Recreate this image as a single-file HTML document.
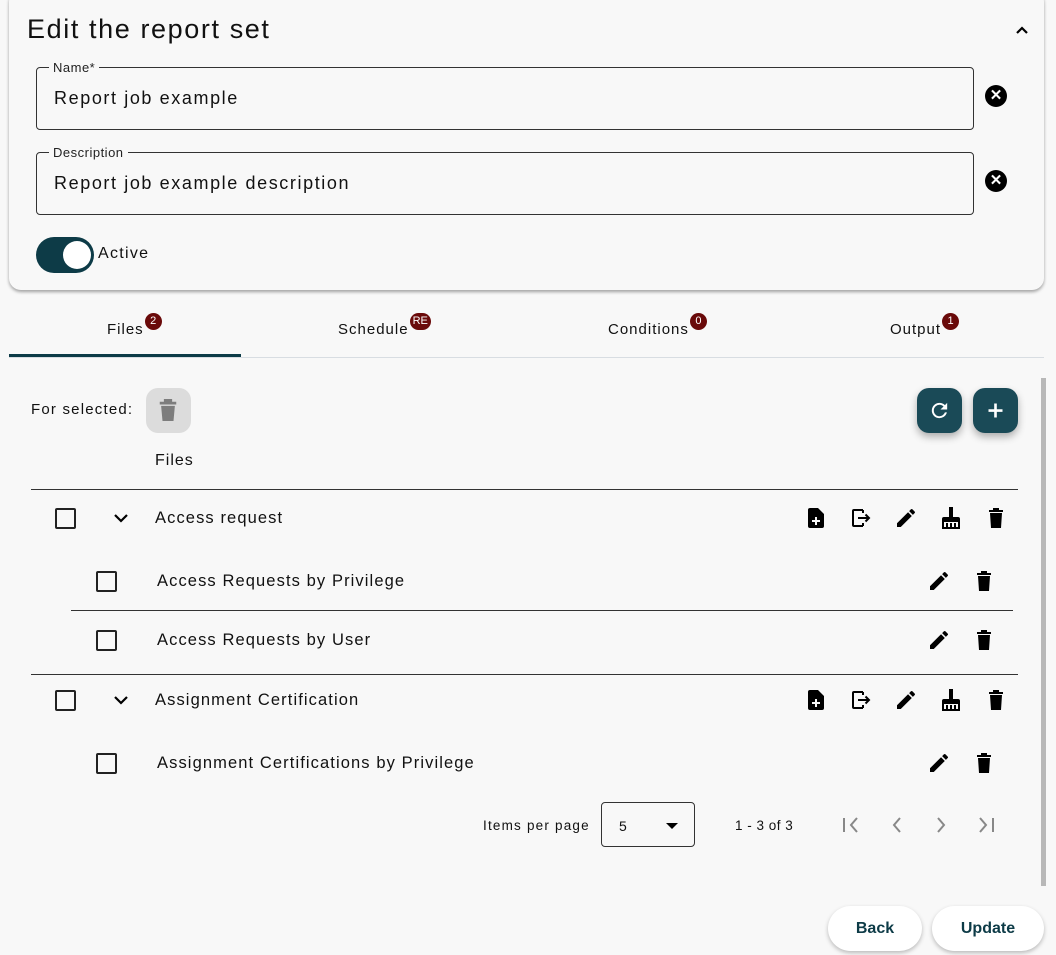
<!DOCTYPE html>
<html><head><meta charset="utf-8"><style>
*{box-sizing:border-box;margin:0;padding:0}
body{width:1056px;height:955px;background:#f8f8f8;font-family:"Liberation Sans",sans-serif;color:#111;position:relative;overflow:hidden}
.a{position:absolute}
.card{left:9px;top:-10px;width:1035px;height:300px;background:#f8f8f8;border-radius:12px;box-shadow:0 2px 3px rgba(0,0,0,.35)}
.field{border:1px solid #333;border-radius:4px;height:63px;left:36px;width:938px}
.lab{font-size:13px;background:#f8f8f8;padding:0 4px;left:12px;top:-8px;color:#222;letter-spacing:.5px}
.val{font-size:18px;left:17px;top:20px;letter-spacing:1.6px;white-space:nowrap}
.clr{width:22px;height:22px;border-radius:50%;background:#000;color:#fff;font-size:15px;font-weight:bold;text-align:center;line-height:22px}
.tab{font-size:15px;top:321px;letter-spacing:1px;white-space:nowrap}
.bd{display:inline-block;position:relative;top:-8px;min-width:17px;height:17px;padding:0 3px;border-radius:9px;background:#6a0a0a;color:#fff;font-size:11px;text-align:center;line-height:17px;letter-spacing:0;vertical-align:top;margin-left:1px}
.cb{width:21px;height:21px;border:2px solid #222;border-radius:2px}
.txt{font-size:16.5px;letter-spacing:1.1px;white-space:nowrap}
.ln{height:1px;background:#333}
.fab{width:45px;height:45px;border-radius:12px;background:#1a4a57;box-shadow:0 4px 8px rgba(0,0,0,.3)}
.pill{height:45px;border-radius:23px;background:#fff;box-shadow:0 2px 4px rgba(0,0,0,.25);font-weight:bold;font-size:16px;color:#0d3b47;text-align:center;line-height:45px}
</style></head><body>
<div class="a card"></div>
<div class="a" style="left:27px;top:14px;font-size:27px;letter-spacing:1.6px;color:#111;white-space:nowrap">Edit the report set</div>
<svg class="a" style="left:1014px;top:24px" width="16" height="12" viewBox="0 0 16 12"><path d="M3 9 L8 4 L13 9" stroke="#000" stroke-width="2.2" fill="none"/></svg>

<div class="a field" style="top:67px"><div class="a lab">Name*</div><div class="a val">Report job example</div></div>
<div class="a clr" style="left:985px;top:85px">✕</div>
<div class="a field" style="top:152px"><div class="a lab">Description</div><div class="a val">Report job example description</div></div>
<div class="a clr" style="left:985px;top:170px">✕</div>

<div class="a" style="left:36px;top:237px;width:58px;height:36px;border-radius:18px;background:#0d3b47"></div>
<div class="a" style="left:63px;top:241px;width:28px;height:28px;border-radius:50%;background:#fff"></div>
<div class="a" style="left:98px;top:245px;font-size:16px;letter-spacing:1.3px">Active</div>

<div class="a tab" style="left:107px">Files<span class="bd">2</span></div>
<div class="a tab" style="left:338px">Schedule<span class="bd">RE</span></div>
<div class="a tab" style="left:608px">Conditions<span class="bd">0</span></div>
<div class="a tab" style="left:890px">Output<span class="bd">1</span></div>
<div class="a" style="left:9px;top:357px;width:1035px;height:1px;background:#d8dde2"></div>
<div class="a" style="left:9px;top:354px;width:232px;height:3px;background:#0d3b47"></div>

<div class="a" style="left:1041px;top:378px;width:5px;height:508px;background:#b8b8b8"></div>

<div class="a" style="left:31px;top:401px;font-size:15px;letter-spacing:1.2px">For selected:</div>
<div class="a" style="left:146px;top:388px;width:45px;height:45px;border-radius:12px;background:#dcdcdc"></div>
<svg class="a" style="left:158px;top:399px" width="20" height="22" viewBox="0 0 14 16"><path d="M1 2h12v2H1zM4 0h6v2H4zM2 5h10l-1 11H3z" fill="#7d7d7d"/></svg>
<div class="a fab" style="left:917px;top:388px"></div>
<svg class="a" style="left:928px;top:399px" width="23" height="23" viewBox="0 0 24 24"><path d="M17.65 6.35A7.96 7.96 0 0 0 12 4a8 8 0 1 0 7.73 10h-2.08A6 6 0 1 1 12 6c1.66 0 3.14.69 4.22 1.78L13 11h7V4z" fill="#fff"/></svg>
<div class="a fab" style="left:973px;top:388px"></div>
<svg class="a" style="left:985px;top:400px" width="21" height="21" viewBox="0 0 24 24"><path d="M12 4v16M4 12h16" stroke="#fff" stroke-width="3"/></svg>
<div class="a" style="left:155px;top:452px;font-size:16px;letter-spacing:1px">Files</div>
<div class="a ln" style="left:31px;top:489px;width:987px"></div>

<svg width="0" height="0" style="position:absolute"><defs>
<symbol id="add" viewBox="0 0 24 24"><path d="M6 2h8l6 6v12a2 2 0 0 1-2 2H6a2 2 0 0 1-2-2V4a2 2 0 0 1 2-2zm5 9v3H8v2h3v3h2v-3h3v-2h-3v-3z" fill="#000" fill-rule="evenodd"/></symbol>
<symbol id="exp" viewBox="0 0 24 24"><path d="M14 4H5a1 1 0 0 0-1 1v14a1 1 0 0 0 1 1h9M14 17v3M14 4v3M9 12h11M16.5 8.5 20 12l-3.5 3.5" stroke="#000" stroke-width="2" fill="none"/></symbol>
<symbol id="pen" viewBox="0 0 24 24"><path d="M3 17.25V21h3.75L17.81 9.94l-3.75-3.75zM20.71 7.04a1 1 0 0 0 0-1.41l-2.34-2.34a1 1 0 0 0-1.41 0l-1.83 1.83 3.75 3.75z" fill="#000"/></symbol>
<symbol id="brm" viewBox="0 0 24 24"><path d="M10 1h4v10h5a2 2 0 0 1 2 2v10H3V13a2 2 0 0 1 2-2h5zM5 16v5h2v-4h2v4h2v-4h2v4h2v-4h2v4h2v-5z" fill="#000" fill-rule="evenodd"/></symbol>
<symbol id="del" viewBox="0 0 24 24"><path d="M5 4h14v2H5zM9 2h6v2H9zM6 7h12l-1 15H7z" fill="#000"/></symbol>
</defs></svg>

<div class="a cb" style="left:55px;top:508px"></div>
<svg class="a" style="left:112px;top:511px" width="18" height="14" viewBox="0 0 18 14"><path d="M3 4l6 6 6-6" stroke="#000" stroke-width="2.2" fill="none"/></svg>
<div class="a txt" style="left:155px;top:509px">Access request</div>
<svg class="a" style="left:804px;top:506px" width="24" height="24"><use href="#add"/></svg>
<svg class="a" style="left:849px;top:506px" width="24" height="24"><use href="#exp"/></svg>
<svg class="a" style="left:894px;top:506px" width="24" height="24"><use href="#pen"/></svg>
<svg class="a" style="left:939px;top:506px" width="24" height="24"><use href="#brm"/></svg>
<svg class="a" style="left:984px;top:506px" width="24" height="24"><use href="#del"/></svg>

<div class="a cb" style="left:96px;top:571px"></div>
<div class="a txt" style="left:157px;top:572px">Access Requests by Privilege</div>
<svg class="a" style="left:927px;top:569px" width="24" height="24"><use href="#pen"/></svg>
<svg class="a" style="left:972px;top:569px" width="24" height="24"><use href="#del"/></svg>
<div class="a ln" style="left:71px;top:610px;width:942px"></div>

<div class="a cb" style="left:96px;top:630px"></div>
<div class="a txt" style="left:157px;top:631px">Access Requests by User</div>
<svg class="a" style="left:927px;top:628px" width="24" height="24"><use href="#pen"/></svg>
<svg class="a" style="left:972px;top:628px" width="24" height="24"><use href="#del"/></svg>
<div class="a ln" style="left:31px;top:674px;width:987px"></div>

<div class="a cb" style="left:55px;top:690px"></div>
<svg class="a" style="left:112px;top:693px" width="18" height="14" viewBox="0 0 18 14"><path d="M3 4l6 6 6-6" stroke="#000" stroke-width="2.2" fill="none"/></svg>
<div class="a txt" style="left:155px;top:691px">Assignment Certification</div>
<svg class="a" style="left:804px;top:688px" width="24" height="24"><use href="#add"/></svg>
<svg class="a" style="left:849px;top:688px" width="24" height="24"><use href="#exp"/></svg>
<svg class="a" style="left:894px;top:688px" width="24" height="24"><use href="#pen"/></svg>
<svg class="a" style="left:939px;top:688px" width="24" height="24"><use href="#brm"/></svg>
<svg class="a" style="left:984px;top:688px" width="24" height="24"><use href="#del"/></svg>

<div class="a cb" style="left:96px;top:753px"></div>
<div class="a txt" style="left:157px;top:754px">Assignment Certifications by Privilege</div>
<svg class="a" style="left:927px;top:751px" width="24" height="24"><use href="#pen"/></svg>
<svg class="a" style="left:972px;top:751px" width="24" height="24"><use href="#del"/></svg>

<div class="a" style="left:483px;top:818px;font-size:13.5px;letter-spacing:1.2px;white-space:nowrap">Items per page</div>
<div class="a" style="left:601px;top:802px;width:94px;height:45px;border:1px solid #333;border-radius:4px"></div>
<div class="a" style="left:619px;top:818px;font-size:14px">5</div>
<svg class="a" style="left:665px;top:822px" width="14" height="8"><path d="M1 1h12L7 7z" fill="#000"/></svg>
<div class="a" style="left:735px;top:818px;font-size:13.5px;letter-spacing:.5px">1 - 3 of 3</div>
<svg class="a" style="left:840px;top:814px" width="120" height="22" viewBox="0 0 120 22" stroke="#888" stroke-width="2" fill="none">
<path d="M4 4v14M17 4l-6 7 6 7"/><path d="M60 4l-6 7 6 7"/><path d="M98 4l6 7-6 7"/></svg>
<svg class="a" style="left:975px;top:814px" width="24" height="22" viewBox="0 0 24 22" stroke="#888" stroke-width="2" fill="none"><path d="M5 4l6 7-6 7M18 4v14"/></svg>

<div class="a pill" style="left:828px;top:906px;width:94px">Back</div>
<div class="a pill" style="left:932px;top:906px;width:112px">Update</div>
</body></html>
